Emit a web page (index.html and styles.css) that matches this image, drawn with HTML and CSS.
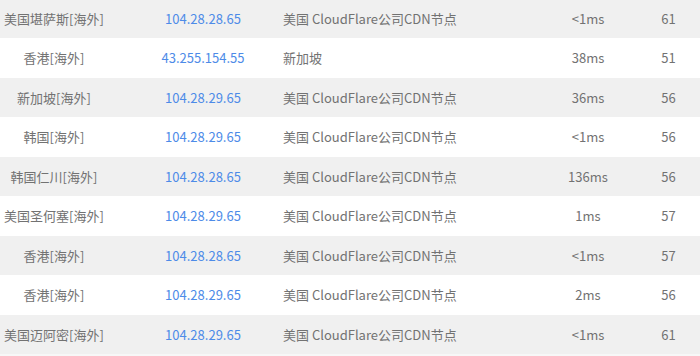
FILE: index.html
```html
<!DOCTYPE html>
<html lang="zh-CN">
<head>
<meta charset="utf-8">
<title>节点列表</title>
<link rel="stylesheet" href="styles.css">
</head>
<body>
<div class="list">
  <div class="row"><span class="c1">美国堪萨斯[海外]</span><span class="c2">104.28.28.65</span><span class="c3">美国 CloudFlare公司CDN节点</span><span class="c4">&lt;1ms</span><span class="c5">61</span></div>
  <div class="row"><span class="c1">香港[海外]</span><span class="c2">43.255.154.55</span><span class="c3">新加坡</span><span class="c4">38ms</span><span class="c5">51</span></div>
  <div class="row"><span class="c1">新加坡[海外]</span><span class="c2">104.28.29.65</span><span class="c3">美国 CloudFlare公司CDN节点</span><span class="c4">36ms</span><span class="c5">56</span></div>
  <div class="row"><span class="c1">韩国[海外]</span><span class="c2">104.28.29.65</span><span class="c3">美国 CloudFlare公司CDN节点</span><span class="c4">&lt;1ms</span><span class="c5">56</span></div>
  <div class="row"><span class="c1">韩国仁川[海外]</span><span class="c2">104.28.28.65</span><span class="c3">美国 CloudFlare公司CDN节点</span><span class="c4">136ms</span><span class="c5">56</span></div>
  <div class="row"><span class="c1">美国圣何塞[海外]</span><span class="c2">104.28.29.65</span><span class="c3">美国 CloudFlare公司CDN节点</span><span class="c4">1ms</span><span class="c5">57</span></div>
  <div class="row"><span class="c1">香港[海外]</span><span class="c2">104.28.28.65</span><span class="c3">美国 CloudFlare公司CDN节点</span><span class="c4">&lt;1ms</span><span class="c5">57</span></div>
  <div class="row"><span class="c1">香港[海外]</span><span class="c2">104.28.29.65</span><span class="c3">美国 CloudFlare公司CDN节点</span><span class="c4">2ms</span><span class="c5">56</span></div>
  <div class="row"><span class="c1">美国迈阿密[海外]</span><span class="c2">104.28.29.65</span><span class="c3">美国 CloudFlare公司CDN节点</span><span class="c4">&lt;1ms</span><span class="c5">61</span></div>
</div>
</body>
</html>
```

FILE: styles.css
```css
html, body {
  margin: 0;
  padding: 0;
  background: #f7f7f7;
}
body {
  font-family: "Noto Sans CJK SC", "Noto Sans", sans-serif;
  font-size: 13px;
  color: #727272;
  width: 700px;
  height: 356px;
  overflow: hidden;
}
.list {
  margin-top: -1.5px;
}
.row {
  display: grid;
  grid-template-columns: 123px 160px 256px 98px 63px;
  align-items: center;
  height: 39.5px;
  background: #f0f0f0;
  white-space: nowrap;
}
.row:nth-child(even) {
  background: #ffffff;
}
.c1 {
  padding-right: 15px;
  text-align: center;
}
.c2 {
  text-align: center;
  color: #4d8be8;
}
.c3 {
  text-align: left;
}
.c4, .c5 {
  text-align: center;
}
```
